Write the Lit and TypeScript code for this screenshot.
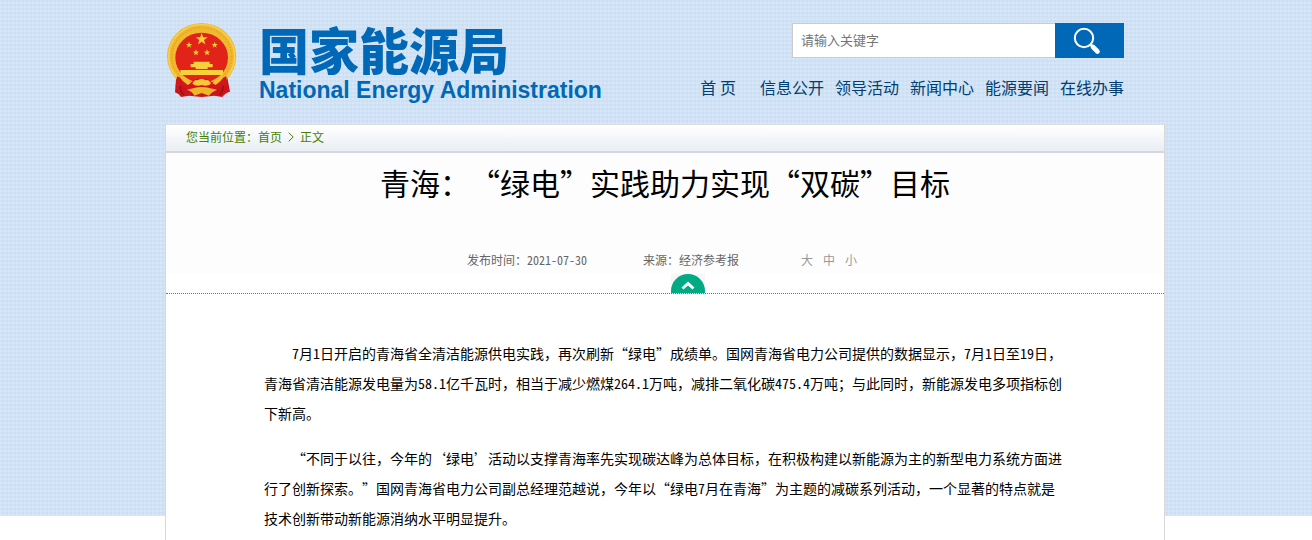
import { LitElement, html, svg, css } from "lit";
import { customElement } from "lit/decorators.js";

const star = (cx: number, cy: number, r: number) => {
  const pts = Array.from({ length: 10 }, (_, i) => {
    const a = -Math.PI / 2 + (i * Math.PI) / 5;
    const d = i % 2 ? r * 0.4 : r;
    return `${(cx + d * Math.cos(a)).toFixed(1)},${(cy + d * Math.sin(a)).toFixed(1)}`;
  });
  return svg`<polygon points=${pts.join(" ")} fill="#f8cf35"></polygon>`;
};

// Digits and Latin punctuation are set half an em wide, so that they keep to the character grid.
const withHalfWidth = (text: string) =>
  text.split(/([\d.\-]+)/).map((part, i) => (i % 2 ? html`<span class="half">${part}</span>` : part));

@customElement("nea-emblem")
class NeaEmblem extends LitElement {
  static styles = css`
    :host { display: block; }
    svg { display: block; }
  `;
  render() {
    return html`<svg width="72" height="75" viewBox="16 24 216 225" role="img" aria-label="国徽">
      <path d="M50 182 L46 232 Q58 236 64 246 L88 242 L126 246 L164 242 L188 246 Q196 234 211 230 L202 182Z" fill="#c9151b"/>
      <ellipse cx="126" cy="124" rx="104" ry="100" fill="#f0b92f"/>
      <ellipse cx="126" cy="124" rx="99" ry="95" fill="none" stroke="#f8d155" stroke-width="4"/>
      <ellipse cx="126" cy="124" rx="90" ry="86" fill="none" stroke="#e5a824" stroke-width="5" stroke-dasharray="5 4"/>
      <ellipse cx="126" cy="128" rx="79" ry="75" fill="#e2231a"/>
      ${star(126, 73, 19)}${star(88, 90, 10)}${star(165, 90, 10)}${star(109, 113, 10)}${star(142, 113, 10)}
      <path d="M102 140H150V147H159V157H144V162H108V157H93V147H102Z" fill="#f9d03c"/>
      <path d="M62 165H190V180H62Z" fill="#f9d03c"/>
      <path d="M52 184 Q78 194 96 202 Q104 190 126 190 Q148 190 156 202 Q174 194 200 184 L204 214 Q182 212 166 226 Q146 216 126 216 Q106 216 86 226 Q70 212 48 214Z" fill="#d3161b"/>
      <path d="M58 184 Q82 184 94 204 L84 210 Q70 202 58 184Z M194 184 Q170 184 158 204 L168 210 Q182 202 194 184Z" fill="#f3bd30"/>
      <path d="M98 206 Q104 192 114 196 Q126 186 138 196 Q148 192 154 206 Q142 216 126 210 Q110 216 98 206Z" fill="#f8c936"/>
      <path d="M82 224 Q104 216 116 222 L126 216 L136 222 Q148 216 172 224 Q154 232 148 242 L126 234 L104 242 Q100 230 82 224Z" fill="#efb52a"/>
      <path d="M62 212 Q60 228 72 240 M190 212 Q192 228 180 240" fill="none" stroke="#98100f" stroke-width="4"/>
    </svg>`;
  }
}

@customElement("app-root")
class AppRoot extends LitElement {
  static styles = css`
    :host {
      display: block;
      min-height: 100vh;
      box-sizing: border-box;
      padding-left: 18px;
      font-family: "Noto Sans CJK SC", sans-serif;
      text-spacing-trim: space-all;
      background-color: #fff;
      background-image:
        repeating-linear-gradient(90deg, rgba(255, 255, 255, 0.12) 0 2px, transparent 2px 4px),
        repeating-linear-gradient(0deg, rgba(255, 255, 255, 0.14) 0 2px, transparent 2px 4px),
        linear-gradient(#cadff3, #cadff3);
      background-size: 100% 516px;
      background-repeat: no-repeat;
    }
    a { color: inherit; text-decoration: none; }
    .wrap {
      max-width: 1000px;
      min-height: 100vh;
      margin: 0 auto;
      display: flex;
      flex-direction: column;
    }
    header {
      display: flex;
      justify-content: space-between;
      height: 124px;
      padding: 23px 41px 0 0;
      box-sizing: border-box;
    }
    .brand { display: flex; gap: 22px; color: #0068b7; }
    .brand-text { display: flex; flex-direction: column; gap: 4px; white-space: nowrap; }
    .cn { font-size: 50px; line-height: 50px; font-weight: 900; }
    .en { font: bold 23px/27px "Liberation Sans", Arial, sans-serif; }
    .tools { display: flex; flex-direction: column; align-items: flex-end; gap: 17px; }
    .search { display: flex; width: 332px; height: 35px; }
    .search input {
      flex: 1;
      min-width: 0;
      box-sizing: border-box;
      border: 1px solid #ccc;
      border-right: 0;
      padding: 0 8px 2px;
      background: #fff;
      font: 13px "Noto Sans CJK SC", sans-serif;
      outline: none;
    }
    .search input::placeholder { color: #757575; }
    .search button {
      width: 69px;
      padding: 0 0 0 18px;
      border: 0;
      background: #0068b7;
      cursor: pointer;
    }
    .search svg { display: block; }
    nav { display: flex; gap: 11px; font-size: 16px; line-height: 24px; color: #003e73; white-space: nowrap; }
    .home { margin-right: 13px; }
    main {
      flex: 1;
      background: #fff;
      border: solid #d8d8d8;
      border-width: 0 1px;
      padding-bottom: 6px;
    }
    .crumb {
      display: flex;
      height: 26px;
      padding-left: 20px;
      border-top: 1px solid #dcdfe2;
      border-bottom: 2px solid #d6d7da;
      background: linear-gradient(#fff, #e9eef4);
      font-size: 12px;
      line-height: 24px;
      color: #478000;
    }
    .sep { width: 6px; margin: 0 6px; padding-bottom: 2px; align-self: center; }
    .top { background: #fdfdfd; }
    h1 {
      margin: 0;
      padding-top: 7px;
      font-size: 30px;
      line-height: 44px;
      font-weight: 400;
      text-align: center;
      color: #000;
    }
    .meta {
      display: flex;
      padding: 46px 0 4px 301px;
      font-size: 12px;
      line-height: 20px;
      color: #666;
    }
    .date { width: 176px; }
    .source { width: 158px; }
    .sizes { display: flex; gap: 10px; color: #999; }
    .sizes button { padding: 0; border: 0; background: none; font: inherit; color: inherit; cursor: pointer; }
    .half { font-feature-settings: "hwid"; }
    .fold {
      display: flex;
      justify-content: center;
      padding-left: 46px;
      border-bottom: 1px dotted #00ab84;
      background: #fff;
    }
    .fold button { padding: 0; border: 0; background: #f7f7f7; cursor: pointer; }
    .fold svg { display: block; }
    article {
      padding: 44px 98px 0;
      font-size: 14px;
      line-height: 30px;
      color: #000;
    }
    article p { margin: 0 0 15px; text-indent: 28px; }
    article p:last-child { margin: 0; }
  `;

  render() {
    return html`<div class="wrap">
      <header>
        <div class="brand">
          <nea-emblem></nea-emblem>
          <div class="brand-text">
            <div class="cn">国家能源局</div>
            <div class="en">National Energy Administration</div>
          </div>
        </div>
        <div class="tools">
          <form class="search" @submit=${(e: Event) => e.preventDefault()}>
            <input type="text" aria-label="请输入关键字" placeholder="请输入关键字" />
            <button type="submit" aria-label="搜索">
              <svg width="28" height="28" viewBox="0 0 28 28" fill="none" stroke="#fff">
                <circle cx="11" cy="11" r="9.2" stroke-width="2"/>
                <path d="M17.5 17.5 L20 20" stroke-width="2.5"/>
                <path d="M20 20 L24.5 24.5" stroke-width="4.6" stroke-linecap="round"/>
              </svg>
            </button>
          </form>
          <nav>
            <a class="home" href="#">首 页</a><a href="#">信息公开</a><a href="#">领导活动</a><a href="#">新闻中心</a><a href="#">能源要闻</a><a href="#">在线办事</a>
          </nav>
        </div>
      </header>
      <main>
        <div class="crumb">
          <span>您当前位置：</span><a href="#">首页</a>
          <svg class="sep" width="6" height="10" viewBox="0 0 6 10" fill="none" stroke="#478000"><path d="M.7 .7 L5.2 5 L.7 9.3"/></svg>
          <a href="#">正文</a>
        </div>
        <div class="top">
          <h1>青海：“绿电”实践助力实现“双碳”目标</h1>
          <div class="meta">
            <span class="date">${withHalfWidth("发布时间：2021-07-30")}</span>
            <span class="source">来源：经济参考报</span>
            <span class="sizes"><button>大</button><button>中</button><button>小</button></span>
          </div>
        </div>
        <div class="fold">
          <button aria-label="收起">
            <svg width="34" height="19" viewBox="0 0 34 19">
              <circle cx="17" cy="17" r="17" fill="#00ab84"/>
              <path d="M11.5 14.5 L17 9.5 L22.5 14.5" fill="none" stroke="#fff" stroke-width="3"/>
            </svg>
          </button>
        </div>
        <article>
          <p>${withHalfWidth("7月1日开启的青海省全清洁能源供电实践，再次刷新“绿电”成绩单。国网青海省电力公司提供的数据显示，7月1日至19日，青海省清洁能源发电量为58.1亿千瓦时，相当于减少燃煤264.1万吨，减排二氧化碳475.4万吨；与此同时，新能源发电多项指标创下新高。")}</p>
          <p>${withHalfWidth("“不同于以往，今年的‘绿电’活动以支撑青海率先实现碳达峰为总体目标，在积极构建以新能源为主的新型电力系统方面进行了创新探索。”国网青海省电力公司副总经理范越说，今年以“绿电7月在青海”为主题的减碳系列活动，一个显著的特点就是技术创新带动新能源消纳水平明显提升。")}</p>
        </article>
      </main>
    </div>`;
  }
}
